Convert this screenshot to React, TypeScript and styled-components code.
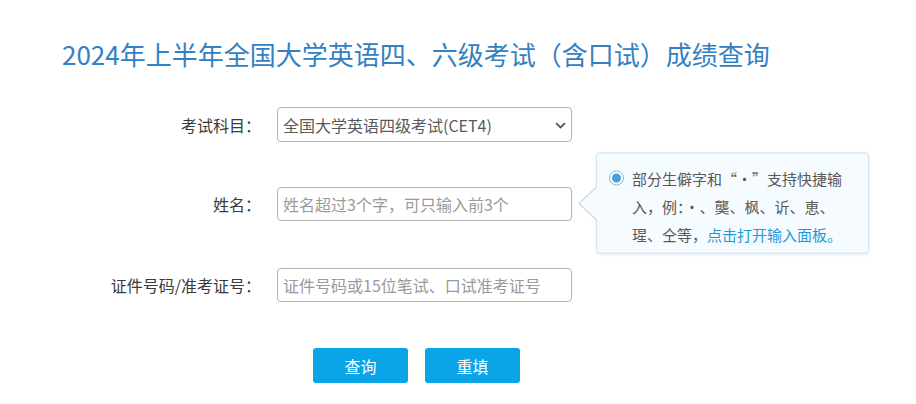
import React from "react";
import styled, { createGlobalStyle } from "styled-components";

const GlobalStyle = createGlobalStyle`
  html, body {
    margin: 0;
    padding: 0;
    background: #ffffff;
  }
  body {
    font-family: "Microsoft YaHei", "Noto Sans CJK SC", "Noto Sans", sans-serif;
    color: #333333;
  }
  * {
    box-sizing: border-box;
  }
`;

const Page = styled.div`
  width: 916px;
  height: 404px;
  overflow: hidden;
  padding-top: 34px;
`;

const Title = styled.h1`
  margin: 0 0 0 62px;
  font-size: 26px;
  line-height: 39px;
  font-weight: normal;
  color: #3380c2;
  white-space: nowrap;
`;

const Form = styled.form`
  display: flex;
  flex-direction: column;
`;

const Row = styled.div<{ $space: number }>`
  position: relative;
  margin-top: ${(p) => p.$space}px;
  display: grid;
  grid-template-columns: 261px 295px;
  column-gap: 16px;
  align-items: center;
`;

const Label = styled.label`
  text-align: right;
  font-size: 16px;
  line-height: 24px;
  color: #3a3a3a;
  white-space: nowrap;
`;

const SelectBox = styled.div`
  position: relative;
  height: 35px;
`;

const Select = styled.select`
  appearance: none;
  -webkit-appearance: none;
  width: 100%;
  height: 100%;
  border: 1px solid #b5b5b5;
  border-radius: 4px;
  background: #ffffff;
  padding: 0 30px 0 5px;
  font-family: inherit;
  font-size: 16px;
  color: #5a5a5a;
  outline: none;
`;

const Chevron = styled.svg`
  position: absolute;
  right: 6px;
  top: 15px;
  width: 11px;
  height: 7px;
  pointer-events: none;
`;

const Input = styled.input`
  width: 100%;
  height: 34px;
  border: 1px solid #b5b5b5;
  border-radius: 4px;
  padding: 0 5px;
  font-family: inherit;
  font-size: 16px;
  color: #333333;
  outline: none;
  &::placeholder {
    color: #9a9a9a;
  }
`;

const Tip = styled.div`
  position: absolute;
  left: 596px;
  top: 50%;
  transform: translateY(calc(-50% - 1px));
  width: 273px;
  display: flex;
  align-items: flex-start;
  gap: 8px;
  padding: 11px 24px 4px 12px;
  background: #f5fbfe;
  border: 1px solid #d2e3ed;
  border-radius: 4px;
  box-shadow: 0 1px 3px rgba(120, 160, 190, 0.18);

  &::before,
  &::after {
    content: "";
    position: absolute;
    top: 50%;
    margin-top: -17px;
    border-style: solid;
    border-width: 17px 18px 17px 0;
    border-color: transparent;
  }
  &::before {
    left: -19px;
    border-right-color: #c9dbe6;
  }
  &::after {
    left: -17px;
    border-right-color: #f5fbfe;
  }
`;

const Radio = styled.span`
  flex: none;
  margin-top: 6px;
  width: 15px;
  height: 15px;
  border-radius: 50%;
  border: 1px solid #8ab6d6;
  background: #ffffff;
  display: flex;
  align-items: center;
  justify-content: center;
  &::after {
    content: "";
    width: 9px;
    height: 9px;
    border-radius: 50%;
    background: #4a9fd8;
  }
`;

const TipText = styled.p`
  margin: 0;
  width: 212px;
  font-size: 15px;
  line-height: 28px;
  color: #585858;
`;

const TipLink = styled.a`
  color: #1d9ad6;
  text-decoration: none;
  cursor: pointer;
`;

const Actions = styled.div`
  display: flex;
  gap: 17px;
  margin-top: 46px;
  padding-left: 313px;
`;

const Button = styled.button`
  width: 95px;
  height: 35px;
  border: none;
  border-radius: 3px;
  background: #0ba5e7;
  color: #ffffff;
  font-family: inherit;
  font-size: 16px;
  cursor: pointer;
`;

export default function App() {
  return (
    <>
      <GlobalStyle />
      <Page>
        <Title>2024年上半年全国大学英语四、六级考试（含口试）成绩查询</Title>
        <Form onSubmit={(e) => e.preventDefault()}>
          <Row $space={34}>
            <Label>考试科目：</Label>
            <SelectBox>
              <Select defaultValue="CET4">
                <option value="CET4">全国大学英语四级考试(CET4)</option>
                <option value="CET6">全国大学英语六级考试(CET6)</option>
              </Select>
              <Chevron viewBox="0 0 11 7">
                <path d="M1 1.2 L5.5 5.4 L10 1.2" fill="none" stroke="#555" strokeWidth="1.8" />
              </Chevron>
            </SelectBox>
          </Row>
          <Row $space={45}>
            <Label>姓名：</Label>
            <Input placeholder="姓名超过3个字，可只输入前3个" />
            <Tip>
              <Radio />
              <TipText>
                部分生僻字和“·”支持快捷输入，例：·、龑、枫、䜣、恵、瑆、仝等，
                <TipLink>点击打开输入面板。</TipLink>
              </TipText>
            </Tip>
          </Row>
          <Row $space={47}>
            <Label>证件号码/准考证号：</Label>
            <Input placeholder="证件号码或15位笔试、口试准考证号" />
          </Row>
          <Actions>
            <Button type="submit">查询</Button>
            <Button type="reset">重填</Button>
          </Actions>
        </Form>
      </Page>
    </>
  );
}
